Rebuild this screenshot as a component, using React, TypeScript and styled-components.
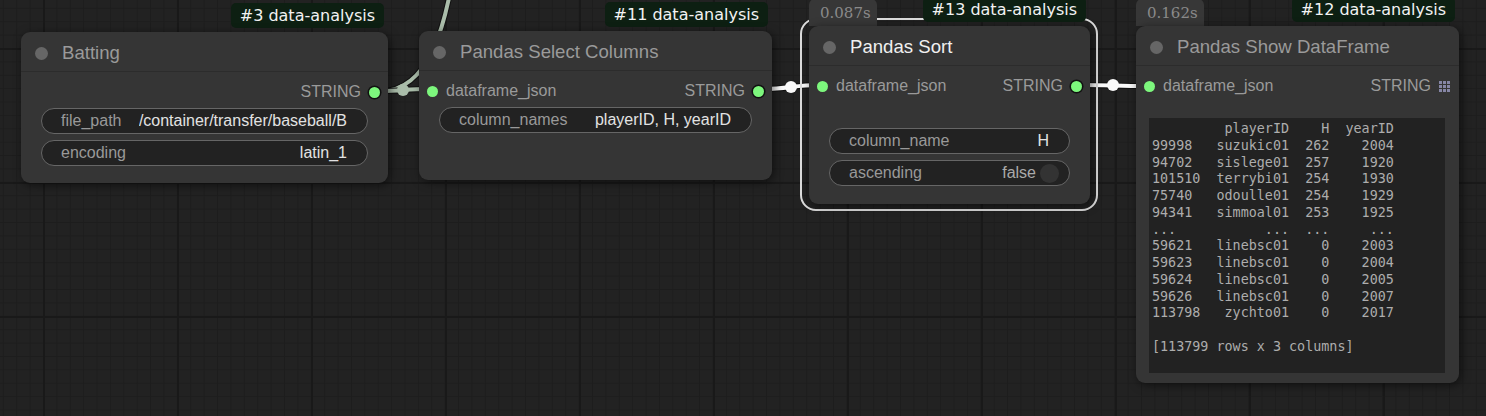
import React from "react"
import styled, { createGlobalStyle } from "styled-components"

const GlobalStyle = createGlobalStyle`
  html, body {
    margin: 0;
    padding: 0;
    background: #222;
    overflow: hidden;
  }
`

const Canvas = styled.div`
  position: relative;
  width: 1486px;
  height: 416px;
  overflow: hidden;
  background-color: #222;
  background-image:
    linear-gradient(90deg, #191919 2px, transparent 2px),
    linear-gradient(#191919 2px, transparent 2px),
    linear-gradient(90deg, #1d1d1d 1px, transparent 1px),
    linear-gradient(#1d1d1d 1px, transparent 1px);
  background-size: 134px 134px, 134px 134px, 13.4px 13.4px, 13.4px 13.4px;
  background-position: 43px 48px, 43px 48px, 2.8px 7.8px, 2.8px 7.8px;
  font-family: "Liberation Sans", Arial, sans-serif;
`

const Wires = styled.svg`
  position: absolute;
  inset: 0;
  width: 100%;
  height: 100%;
  pointer-events: none;
`

const NodeFrame = styled.div.attrs<{ $x: number; $y: number; $w: number; $h: number }>((p) => ({
  style: { left: p.$x, top: p.$y, width: p.$w, height: p.$h },
}))<{ $x: number; $y: number; $w: number; $h: number }>`
  position: absolute;
`

const SelectionRing = styled.div`
  position: absolute;
  left: -9px;
  right: -8px;
  top: -8px;
  bottom: -7px;
  border: 2px solid #dcdcdc;
  border-radius: 16px;
`

const NodeBox = styled.div`
  position: relative;
  display: flex;
  flex-direction: column;
  width: 100%;
  height: 100%;
  box-sizing: border-box;
  background: #353535;
  border-radius: 9px;
  box-shadow: 2px 2px 10px rgba(0, 0, 0, 0.55);
`

const Badge = styled.div`
  position: absolute;
  right: 4px;
  bottom: calc(100% + 4px);
  height: 25px;
  padding: 0 9px;
  display: flex;
  align-items: center;
  background: #0d1f12;
  border-radius: 5px;
  color: #f2f2f2;
  font-family: "DejaVu Sans", sans-serif;
  font-size: 16px;
  white-space: nowrap;
`

const TimingTab = styled.div`
  position: absolute;
  left: 0;
  bottom: 100%;
  width: 68px;
  height: 27px;
  box-sizing: border-box;
  padding: 0 0 0 11px;
  display: flex;
  align-items: center;
  background: #373737;
  border-radius: 6px 6px 0 0;
  color: #8a8a8a;
  font-family: "DejaVu Serif", serif;
  font-size: 15px;
`

const TitleBar = styled.div`
  height: 40px;
  flex: none;
  box-sizing: border-box;
  display: flex;
  align-items: center;
  gap: 14px;
  padding: 3px 0 0 14px;
  border-bottom: 1px solid #2c2c2c;
`

const TitleDot = styled.span`
  width: 13px;
  height: 13px;
  border-radius: 50%;
  background: #666;
`

const TitleText = styled.span<{ $active?: boolean }>`
  font-size: 18.6px;
  color: ${(p) => (p.$active ? "#f0f0f0" : "#9a9a9a")};
  white-space: nowrap;
`

const Body = styled.div`
  display: flex;
  flex-direction: column;
  padding-top: 7px;
`

const SlotRow = styled.div`
  height: 24px;
  display: flex;
  align-items: center;
  justify-content: space-between;
  padding: 1px 8px 0;
  font-size: 16px;
  color: #9a9a9a;
`

const Slot = styled.div`
  display: flex;
  align-items: center;
  gap: 8px;
`

const SlotDot = styled.span<{ $ring?: boolean }>`
  width: 11px;
  height: 11px;
  border-radius: 50%;
  background: #7df77d;
  box-shadow: ${(p) => (p.$ring ? "0 0 0 1.5px #111" : "none")};
`

const GridIcon = styled.span`
  display: grid;
  grid-template-columns: repeat(3, 3px);
  grid-auto-rows: 3px;
  gap: 1px;
  margin-right: 1px;
  span {
    background: #8686a6;
  }
`

const Widgets = styled.div<{ $top: number }>`
  display: flex;
  flex-direction: column;
  gap: 6px;
  margin: ${(p) => p.$top}px 20px 0;
`

const Widget = styled.div<{ $toggle?: boolean }>`
  height: 26px;
  box-sizing: border-box;
  display: flex;
  align-items: center;
  justify-content: space-between;
  gap: 16px;
  padding: 0 ${(p) => (p.$toggle ? 10 : 20)}px 0 19px;
  border: 1px solid #666;
  border-radius: 13px;
  background: #222;
  font-size: 16px;
  white-space: nowrap;
`

const WidgetLabel = styled.span`
  color: #999;
`

const WidgetValue = styled.span<{ $muted?: boolean }>`
  display: flex;
  align-items: center;
  gap: 4px;
  color: ${(p) => (p.$muted ? "#aaa" : "#e2e2e2")};
  overflow: hidden;
`

const Knob = styled.span`
  width: 19px;
  height: 19px;
  border-radius: 50%;
  background: #333;
`

const Output = styled.pre`
  margin: 20px 14px 0 13px;
  height: 255px;
  box-sizing: border-box;
  padding: 3px 3px;
  background: #222;
  color: #adadad;
  font-family: "DejaVu Sans Mono", monospace;
  font-size: 13.4px;
  line-height: 16.75px;
  overflow: hidden;
`

const TABLE = `         playerID    H  yearID
99998   suzukic01  262    2004
94702   sislege01  257    1920
101510  terrybi01  254    1930
75740   odoulle01  254    1929
94341   simmoal01  253    1925
...           ...  ...     ...
59621   linebsc01    0    2003
59623   linebsc01    0    2004
59624   linebsc01    0    2005
59626   linebsc01    0    2007
113798   zychto01    0    2017

[113799 rows x 3 columns]`

type Field = { label: string; value: string; toggle?: boolean }

type NodeProps = {
  id: number
  title: string
  x: number
  y: number
  w: number
  h: number
  input?: string
  output?: string
  outputIcon?: boolean
  widgets?: Field[]
  widgetsTop?: number
  timing?: string
  selected?: boolean
  text?: string
}

function GraphNode(props: NodeProps) {
  const { id, title, x, y, w, h, input, output, widgets, timing, selected } = props
  return (
    <NodeFrame $x={x} $y={y} $w={w} $h={h}>
      {selected && <SelectionRing />}
      {timing && <TimingTab>{timing}</TimingTab>}
      <Badge>#{id} data-analysis</Badge>
      <NodeBox>
        <TitleBar>
          <TitleDot />
          <TitleText $active={selected}>{title}</TitleText>
        </TitleBar>
        <Body>
          <SlotRow>
            <Slot>
              {input && (
                <>
                  <SlotDot />
                  {input}
                </>
              )}
            </Slot>
            <Slot>
              {output}
              {props.outputIcon ? (
                <GridIcon>
                  {Array.from({ length: 9 }).map((_, i) => (
                    <span key={i} />
                  ))}
                </GridIcon>
              ) : (
                output && <SlotDot $ring />
              )}
            </Slot>
          </SlotRow>
          {widgets && (
            <Widgets $top={props.widgetsTop ?? 4}>
              {widgets.map((f) => (
                <Widget key={f.label} $toggle={f.toggle}>
                  <WidgetLabel>{f.label}</WidgetLabel>
                  <WidgetValue $muted={f.toggle}>
                    {f.value}
                    {f.toggle && <Knob />}
                  </WidgetValue>
                </Widget>
              ))}
            </Widgets>
          )}
          {props.text && <Output>{props.text}</Output>}
        </Body>
      </NodeBox>
    </NodeFrame>
  )
}

function Link({ d, color, mid }: { d: string; color: string; mid?: [number, number] }) {
  return (
    <g>
      <path d={d} fill="none" stroke="#111" strokeWidth={6} />
      <path d={d} fill="none" stroke={color} strokeWidth={4} />
      {mid && <circle cx={mid[0]} cy={mid[1]} r={6} fill={color} />}
    </g>
  )
}

export default function App() {
  const stringLink = "#aabdaa"
  return (
    <>
      <GlobalStyle />
      <Canvas>
        <Wires viewBox="0 0 1486 416">
          <Link d="M381 91 C 430 91, 446 22, 454 -30" color={stringLink} />
          <Link d="M381 91 C 400 91, 408 89, 427 89" color={stringLink} mid={[403, 90]} />
          <Link d="M765 89 C 785 89, 797 85, 817 85" color="#fafafa" mid={[791, 87]} />
          <Link d="M1082 85 C 1105 85, 1122 86, 1145 86" color="#fafafa" mid={[1113, 85]} />
        </Wires>

        <GraphNode
          id={3}
          title="Batting"
          x={21}
          y={32}
          w={367}
          h={151}
          output="STRING"
          widgets={[
            { label: "file_path", value: "/container/transfer/baseball/B" },
            { label: "encoding", value: "latin_1" },
          ]}
        />
        <GraphNode
          id={11}
          title="Pandas Select Columns"
          x={419}
          y={31}
          w={353}
          h={149}
          input="dataframe_json"
          output="STRING"
          widgets={[{ label: "column_names", value: "playerID, H, yearID" }]}
        />
        <GraphNode
          id={13}
          title="Pandas Sort"
          x={809}
          y={26}
          w={281}
          h={178}
          input="dataframe_json"
          output="STRING"
          selected
          timing="0.087s"
          widgetsTop={30}
          widgets={[
            { label: "column_name", value: "H" },
            { label: "ascending", value: "false", toggle: true },
          ]}
        />
        <GraphNode
          id={12}
          title="Pandas Show DataFrame"
          x={1136}
          y={26}
          w={323}
          h={357}
          input="dataframe_json"
          output="STRING"
          outputIcon
          timing="0.162s"
          text={TABLE}
        />
      </Canvas>
    </>
  )
}
